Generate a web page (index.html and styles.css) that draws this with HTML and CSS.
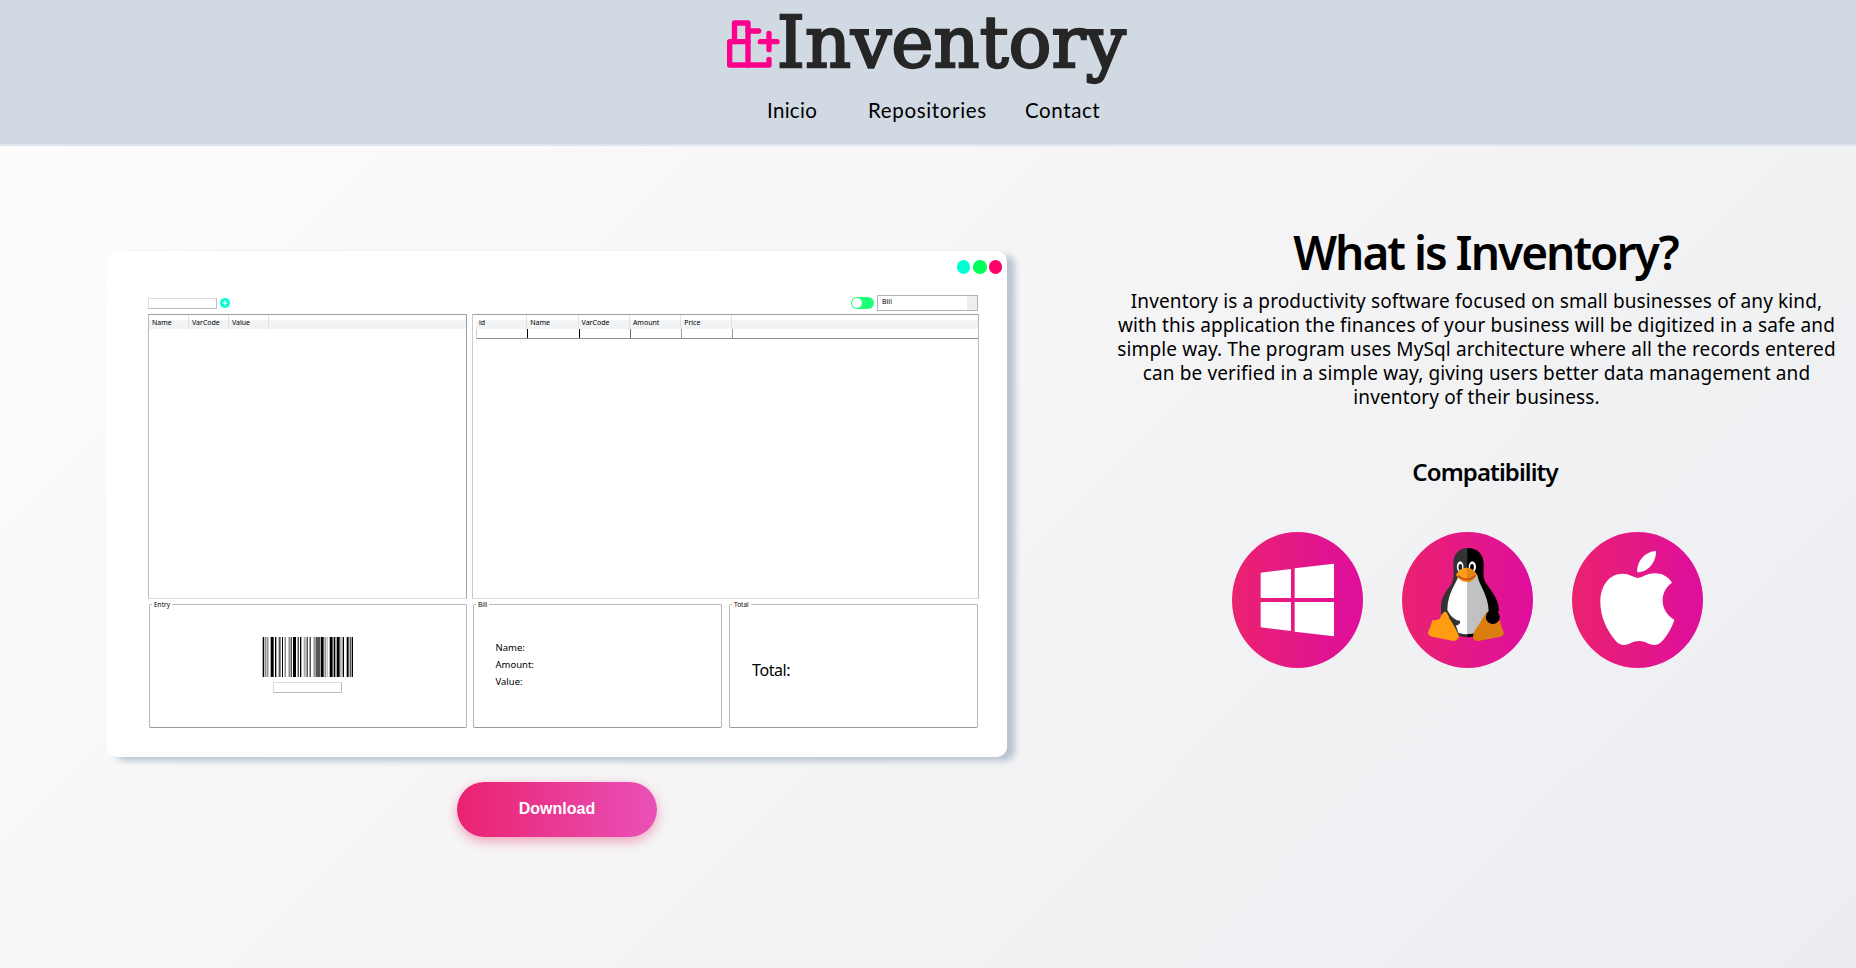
FILE: index.html
```html
<!DOCTYPE html>
<html lang="en">
<head>
<meta charset="utf-8">
<title>Inventory</title>
<link rel="stylesheet" href="styles.css">
</head>
<body>
<header class="header">
  <svg class="logo" viewBox="81 36 1200 222" role="img" aria-label="Inventory">
    <g fill="none" stroke="#ff008c" stroke-width="16" stroke-linecap="round" stroke-linejoin="round">
      <path d="M89 125H144V195H89Z"/>
      <path d="M103.500 125V69H144V125"/>
      <path d="M144 93H176M144 195H207V178M207 100V149M181 125H231"/>
    </g>
    <text class="logo-text" x="230" y="201" textLength="1048" lengthAdjust="spacingAndGlyphs">Inventory</text>
  </svg>
  <nav class="nav">
    <a class="nav-link nav-home">Inicio</a>
    <a class="nav-link nav-repos">Repositories</a>
    <a class="nav-link nav-contact">Contact</a>
  </nav>
</header>
<main class="main">
  <section class="preview">
    <div class="window">
      <div class="dots"><i class="dot cyan"></i><i class="dot green"></i><i class="dot pink"></i></div>
      <div class="toolbar">
        <span class="field"></span>
        <svg class="add" viewBox="0 0 10 10"><circle cx="5" cy="5" r="5" fill="#00ffcf"/><path d="M5 2.200V7.800M2.200 5H7.800" stroke="#fff" stroke-width="1.200"/></svg>
        <span class="toggle"></span>
        <span class="select">Bill<i class="select-arrow"></i></span>
      </div>
      <div class="tables">
        <div class="table">
          <div class="thead"><span class="th th-s">Name</span><span class="th th-s">VarCode</span><span class="th th-s">Value</span></div>
        </div>
        <div class="table table-bill">
          <div class="thead"><span class="th">id</span><span class="th">Name</span><span class="th">VarCode</span><span class="th">Amount</span><span class="th">Price</span></div>
          <div class="row"><i class="cell dark"></i><i class="cell dark"></i><i class="cell mid"></i><i class="cell"></i><i class="cell"></i></div>
        </div>
      </div>
      <div class="groups">
        <div class="group entry"><span class="legend">Entry</span>
          <svg class="barcode" viewBox="397 0 273 120" preserveAspectRatio="none">
            <path fill="#000" d="M399 0h4v120h-4zM423 0h9v120h-9zM436 0h3v120h-3zM457 0h3v120h-3zM483 0h3v120h-3zM490 0h9v120h-9zM504 0h3v120h-3zM511 0h4v120h-4zM531 0h3v120h-3zM540 0h3v120h-3zM558 0h3v120h-3zM566 0h4v120h-4zM573 0h9v120h-9zM600 0h9v120h-9zM612 0h5v120h-5zM621 0h7v120h-7zM639 0h4v120h-4zM651 0h6v120h-6zM666 0h4v120h-4z"/>
            <path fill="#555" d="M405 0h3v120h-3zM411 0h3v120h-3zM447 0h6v120h-6zM465 0h3v120h-3zM477 0h3v120h-3zM552 0h3v120h-3zM561 0h5v120h-5zM585 0h3v120h-3zM628 0h4v120h-4zM660 0h4v120h-4z"/>
            <path fill="#aaa" d="M414 0h3v120h-3zM439 0h3v120h-3zM522 0h6v120h-6zM591 0h3v120h-3zM633 0h3v120h-3z"/>
          </svg>
          <span class="field"></span>
        </div>
        <div class="group bill"><span class="legend">Bill</span><span>Name:</span><span>Amount:</span><span>Value:</span></div>
        <div class="group total"><span class="legend">Total</span><span>Total:</span></div>
      </div>
    </div>
    <button class="download">Download</button>
  </section>
  <section class="about">
    <h1 class="title">What is Inventory?</h1>
    <p class="text">Inventory is a productivity software focused on small businesses of any kind,<br>with this application the finances of your business will be digitized in a safe and<br>simple way. The program uses MySql architecture where all the records entered<br>can be verified in a simple way, giving users better data management and<br>inventory of their business.</p>
    <h2 class="subtitle">Compatibility</h2>
    <div class="systems">
      <div class="system"><svg class="system-icon" viewBox="66 36 393 408"><path fill="#fff" d="M152 158L243 147V234H152ZM254 145L372 131V234H254ZM152 246H243V333L152 322ZM254 246H372V349L254 335Z"/></svg></div>
      <div class="system"><svg class="system-icon" viewBox="36 36 393 408">
        <path fill="#333" d="M232 84C206 84 190 104 190 131C190 158 194 172 184 192C170 213 153 230 153 263V282L200 346Q232 358 264 346L300 270L232 84Z"/>
        <path fill="#000" d="M232 84C264 84 281 104 281 131C281 158 278 172 288 190C306 216 326 238 327 272L300 290L264 346Q248 352 232 352Z"/>
        <path fill="#fff" d="M232 165H206C203 185 172 218 172 270C180 286 196 306 205 338Q218 343 232 343Z"/>
        <path fill="#c0c2c2" d="M231 165H262C265 192 296 226 296 274L262 337Q248 343 231 343Z"/>
        <path fill="#333" d="M170 272Q192 302 210 302Q213 314 196 317L180 307Z"/>
        <path fill="#ff9c12" d="M166 275Q157 275 150 296Q140 301 127 301Q122 322 114 337Q113 347 126 350L190 363Q205 362 207 348Q193 316 179 297Q172 276 166 275Z"/>
        <path fill="#dc7d10" d="M290 275L266 314Q249 336 249 350Q250 363 264 363L331 350Q342 348 341 337Q333 321 329 299Z"/>
        <circle cx="308.500" cy="291" r="21" fill="#000"/>
        <ellipse cx="210.500" cy="140" rx="10" ry="16" fill="#fff"/><ellipse cx="247" cy="140" rx="11" ry="16" fill="#fff"/>
        <ellipse cx="211" cy="142" rx="5.500" ry="10" fill="#222"/><ellipse cx="246" cy="142" rx="5.500" ry="10" fill="#000"/>
        <path fill="#ff9c12" d="M198 164Q212 143 229 143Q247 143 261 164Q250 186 230 186Q210 186 198 164Z"/>
        <path fill="#e48612" d="M230 143Q248 144 261 164Q250 186 230 186Z"/>
        <path fill="none" stroke="#b54818" stroke-width="4" d="M204 167Q230 190 255 167"/>
      </svg></div>
      <div class="system"><svg class="system-icon" viewBox="36 36 393 408"><path fill="#fff" d="M232 157C229 125 256 94 288 93C289 124 266 157 232 157ZM235 174C252 170 264 160 285 160C306 160 325 170 336 188C297 214 298 273 343 299C336 324 321 347 306 364C294 379 276 376 263 370C245 361 229 361 211 370C195 378 180 377 168 364C140 331 121 290 121 246C121 196 148 161 188 161C208 161 221 172 235 174Z"/></svg></div>
    </div>
  </section>
</main>
</body>
</html>
```
FILE: styles.css
```css
* { box-sizing: border-box; }
body {
  margin: 0;
  height: 968px;
  overflow: hidden;
  color: #000;
  font-family: "Noto Sans", sans-serif;
  background: linear-gradient(135deg, #fffcfc 0%, #ebedf0 100%);
}
.header {
  height: 146px;
  padding-top: 12px;
  background: #d1d9e2;
  border-bottom: 2px solid #dfe5ee;
}
.logo { display: block; width: 400px; height: 74px; margin-left: 727px; overflow: visible; }
.logo-text { font: 214px "DejaVu Serif", serif; fill: #262626; stroke: #262626; stroke-width: 7px; }
.nav { display: flex; margin: 11px 0 0 767px; font: 20.5px/26px Lato, sans-serif; white-space: nowrap; }
.nav-home { width: 101px; letter-spacing: .3px; }
.nav-repos { width: 157px; letter-spacing: .65px; }
.nav-contact { letter-spacing: .6px; }

.main { display: flex; }
.preview { width: 900px; margin: 105px 0 0 107px; display: flex; flex-direction: column; }
.window {
  height: 506px;
  padding: 9px 5px 0 41px;
  background: #fff;
  border-radius: 10px;
  box-shadow: 8px 4px 6px #b8c4d1;
  font-size: 7px;
  line-height: 10px;
}
.dots { display: flex; justify-content: flex-end; gap: 3px; height: 14px; }
.dot { width: 13.5px; height: 13.5px; border-radius: 50%; }
.cyan { background: #00ffd5; }
.green { background: #00ff5a; margin-right: -1px; }
.pink { background: #ff006a; }
.toolbar { display: flex; align-items: center; height: 16px; margin-top: 21px; }
.field { width: 69px; height: 11px; border: 1px solid #bbbbc2; border-top-color: #ddd; border-left-color: #ddd; background: #fff; }
.add { width: 10px; height: 10px; margin-left: 3px; }
.toggle { width: 22.5px; height: 12px; margin-left: 621px; padding: 1px; border-radius: 6px; background: #20ff78; }
.toggle::before { content: ""; display: block; width: 10px; height: 10px; border-radius: 50%; background: #fff; }
.select { display: flex; justify-content: space-between; width: 101px; height: 16px; margin-left: 3.5px; padding-left: 4px; border: 1px solid #b3b3bc; line-height: 12px; }
.select-arrow { width: 10px; background: #eee; }
.tables { display: flex; gap: 5px; height: 284.5px; margin-top: 3px; }
.table { width: 319px; border: 1px solid #a0a0a0; border-left-color: #bbb; border-bottom-color: #ddd; }
.table-bill { width: 507px; padding-left: 3px; border-left-color: #ccc; border-right-color: #bbb; }
.thead { display: flex; height: 14px; line-height: 15px; background: linear-gradient(#fff 35%, #f4f5f7 36%, #f0f1f3); }
.th { width: 51.300px; padding-left: 3px; border-right: 1px solid #e0e0e2; }
.th-s { width: 40px; }
.row { display: flex; height: 10px; border-bottom: 1px solid #909090; border-left: 1px solid #ccc; }
.cell { width: 51.300px; border-right: 1px solid #999; }
.dark { border-right-color: #000; }
.mid { border-right-color: #666; }
.groups { display: flex; margin: 5px 0 0 1px; height: 124px; }
.group { position: relative; display: flex; flex-direction: column; border: 1px solid #b8b8b8; border-bottom-color: #999; border-radius: 2px; }
.legend { position: absolute; top: -5px; left: 2px; padding: 0 2px; background: #fff; font-size: 6.500px; line-height: 10px; letter-spacing: 0; }
.entry { width: 317.500px; align-items: center; padding: 32px 0 0 0; }
.barcode { width: 91px; height: 40px; margin-bottom: 5px; }
.bill { width: 249px; margin-left: 6.500px; padding: 34px 0 0 21.5px; font-size: 9.500px; line-height: 17px; }
.total { width: 249px; margin-left: 7px; padding: 54px 0 0 22px; font: 16px/22px "Noto Sans", sans-serif; letter-spacing: -.4px; }
.download {
  width: 200px;
  height: 55px;
  margin: 25px 0 0 350px;
  padding: 0 0 2px;
  border: 0;
  border-radius: 28px;
  color: #fff;
  font: bold 16px "Liberation Sans", Arial, sans-serif;
  background: linear-gradient(90deg, #ea2270, #e951b8);
  box-shadow: 0 4px 12px rgba(234, 34, 90, .4);
}
.about { width: 740px; margin: 77px 0 0 106px; text-align: center; }
.title { margin: 0 0 0 5px; font: 600 46px/58px "Noto Sans", sans-serif; letter-spacing: -2px; white-space: nowrap; }
.text { margin: 8px 13px 0 0; font-size: 19px; line-height: 24px; letter-spacing: .13px; white-space: nowrap; }
.subtitle { margin: 48px 0 0 4px; font: 600 24px/30px "Noto Sans", sans-serif; letter-spacing: -.9px; }
.systems { display: flex; gap: 39px; margin: 45px 0 0 119px; }
.system { width: 131px; height: 136px; border-radius: 50%; background: linear-gradient(90deg, #ea2270, #df0e9d); }
.system-icon { display: block; width: 131px; height: 136px; }
```
